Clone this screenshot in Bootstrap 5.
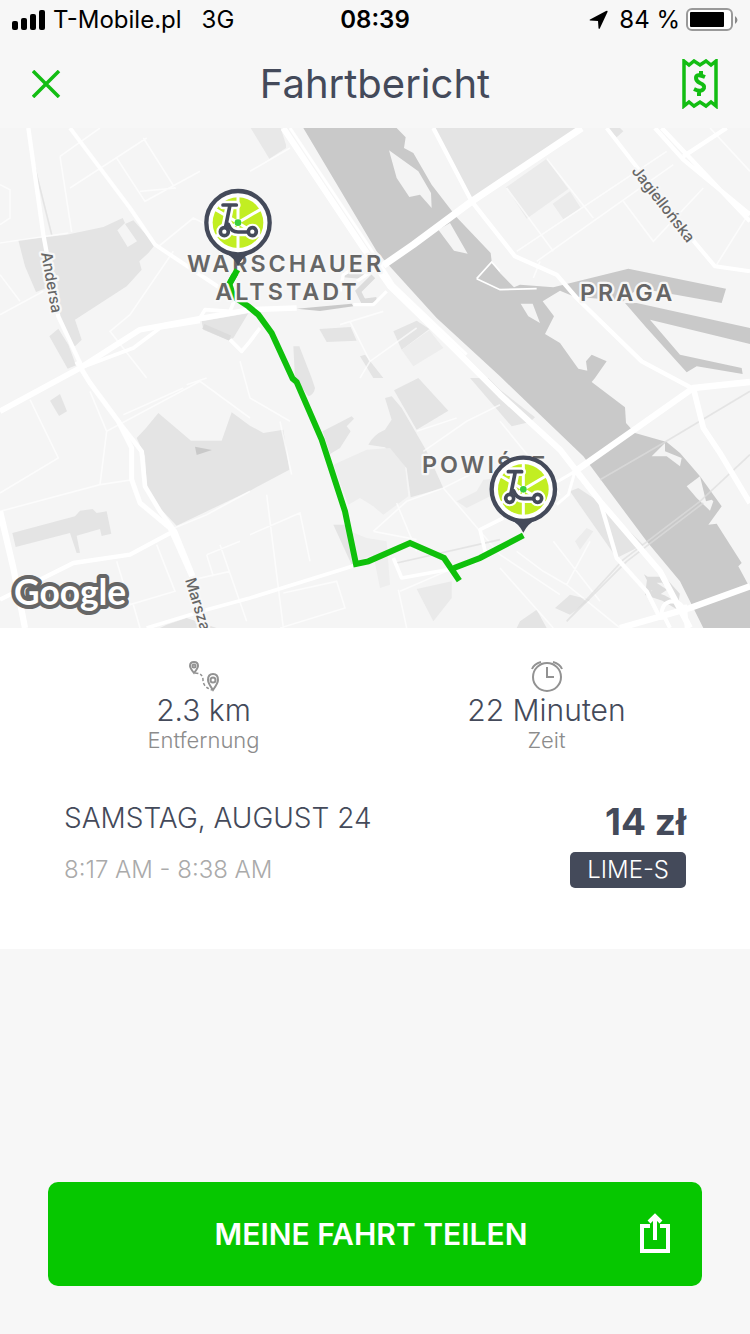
<!DOCTYPE html>
<html lang="de">
<head>
<meta charset="utf-8">
<meta name="viewport" content="width=device-width, initial-scale=1">
<title>Fahrtbericht</title>
<link href="https://cdn.jsdelivr.net/npm/bootstrap@5.3.0/dist/css/bootstrap.min.css" rel="stylesheet">
<style>
  :root { --ink: #444a5a; --lime: #06c700; }
  body { background: #f7f7f7; color: var(--ink); font-family: Inter, "Liberation Sans", sans-serif; font-weight: 300; }
  .status { height: 40px; padding: 0 12px; font-size: 24px; font-weight: 400; line-height: 40px; color: #000; }
  .status-side { flex: 1 1 0; }
  .status-net { gap: 20px; margin-left: 7px; }
  .status-power { gap: 6px; }
  .status-time { font-weight: 600; }
  .titlebar { height: 88px; padding: 0 32px; }
  .titlebar h1 { font-size: 40px; line-height: 44px; font-weight: 400; }
  .icon-btn { line-height: 0; }
  .map-label { fill: #666; font-weight: 500; stroke: #f7f7f7; stroke-width: 14px; stroke-linejoin: round; paint-order: stroke; }
  .district { font-size: 70px; letter-spacing: 9px; font-weight: 600; }
  .street { font-size: 46px; }
  .maker { font-family: Lato, sans-serif; font-size: 106px; font-weight: 700; fill: #fff; stroke: #666; stroke-width: 24px; stroke-linejoin: round; paint-order: stroke; }
  .stats { padding: 32px 32px 0; }
  .stat-value { font-size: 30px; line-height: 36px; }
  .stat-name { font-size: 22px; line-height: 24px; color: #8c8c8c; }
  .trip { padding: 48px 64px 61px; }
  .trip-date { font-size: 28px; line-height: 36px; }
  .trip-time { font-size: 24px; line-height: 36px; color: #aaa; }
  .trip-price { font-size: 37px; line-height: 44px; font-weight: 700; }
  .trip-type { background: var(--ink); color: #fff; font-size: 24px; line-height: 36px; padding: 0 17px; border-radius: 5px; }
  .share { background: var(--lime); color: #fff; height: 104px; border: 0; border-radius: 10px; font-size: 30px; line-height: 36px; font-weight: 600; padding: 0 31px; }
  .share-text { padding-left: 24px; }
</style>
</head>
<body class="d-flex flex-column min-vh-100">

<header>
  <div class="status d-flex align-items-center">
    <div class="status-side d-flex align-items-center">
      <svg width="34" height="20" viewBox="0 0 34 20" aria-label="Signal"><rect y="11" width="6" height="9" rx="2"/><rect x="9" y="8" width="6" height="12" rx="2"/><rect x="18" y="4" width="6" height="16" rx="2"/><rect x="27" width="6" height="20" rx="2"/></svg>
      <div class="status-net d-flex"><span>T-Mobile.pl</span><span>3G</span></div>
    </div>
    <span class="status-time">08:39</span>
    <div class="status-side status-power d-flex align-items-center justify-content-end">
      <svg width="20" height="20" viewBox="0 0 20 20" class="me-1" aria-hidden="true"><path d="M1 9.500 17 1Q19 0 18.500 2L11 18Q10 20 9.500 18L9 11 1 10.500Q0 10 1 9.500Z"/></svg>
      <span>84 %</span>
      <svg width="52" height="24" viewBox="0 0 52 24" aria-label="Akku"><rect x="1" y="1" width="45" height="21" rx="5" fill="#fff" stroke="#999" stroke-width="2"/><rect x="4" y="4" width="34" height="15" rx="1"/><path d="M49 8Q54 12 49 16Z" fill="#888"/></svg>
    </div>
  </div>
  <div class="titlebar d-flex align-items-center justify-content-between">
    <button type="button" class="btn p-0 border-0 icon-btn" aria-label="Schließen"><svg width="36" height="28" viewBox="0 0 36 28"><path d="M1 1 27 27M27 1 1 27" stroke="#12bd12" stroke-width="3.500"/></svg></button>
    <h1 class="m-0">Fahrtbericht</h1>
    <button type="button" class="btn p-0 border-0 icon-btn" aria-label="Quittung"><svg width="36" height="50" viewBox="0 0 36 50" fill="none" stroke="#12bd12" stroke-width="3.500"><path d="M2 2 7 6 12 2 18 6 24 2 29 6 34 2V47L29 43 24 47 18 43 12 47 7 43 2 47Z"/><path d="M23 18Q14 14 14 19 14 22 18 24 23 26 22 29 20 34 12 30M19 12V17M17 31V37" stroke-width="4"/></svg></button>
  </div>
</header>

<svg class="d-block w-100" viewBox="0 0 2250 1500" role="img" aria-label="Karte der Fahrt">
  <defs>
    <g id="pin">
      <path d="M-62 78 -38 92Q-14 102 0 130 14 102 38 92L62 78Z" fill="#444a5a"/>
      <circle r="95" fill="#fff" stroke="#444a5a" stroke-width="13"/>
      <circle r="76" fill="#c2ee22"/>
      <path d="M0-78V78M0 0 68-40M0 0-68-40M0 0 68 42M0 0-68 42" stroke="#fff" stroke-width="9"/>
      <g fill="none" stroke-linecap="round" stroke-linejoin="round">
        <g stroke="#fff" stroke-width="26"><path d="M-45-53H-5M-24-53-37 12M-29 5Q-20 28 0 28H30"/><circle cx="-41" cy="27" r="11"/><circle cx="43" cy="27" r="11"/></g>
        <g stroke="#444a5a" stroke-width="11"><path d="M-45-53H-5M-24-53-37 12M-29 5Q-20 28 0 28H30"/><circle cx="-41" cy="27" r="12"/><circle cx="43" cy="27" r="12"/></g>
      </g>
      <circle r="10" fill="#38cf3c"/>
    </g>
  </defs>
  <rect width="2250" height="1500" fill="#f5f5f5"/>

  <!-- parks and blocks -->
  <g fill="#e4e4e4">
    <path d="M55 337 200 320 310 297 368 270 375 285 352 307 383 357 411 340 375 288 400 277 465 350 445 375 418 400 425 425 380 475 225 575 245 635 225 655 205 645 175 570 140 480 108 492 75 415Z"/>
    <path d="M148 625 175 602 205 650 228 712 203 722Z"/>
    <path d="M605 580 745 556 700 630 685 637 610 605Z"/>
    <path d="M752 0H842L858 50V60L808 92Z" fill="#e8e8e8"/>
    <path d="M1305 0H1740L1500 155 1415 212Z"/>
    <path d="M958 603 1052 597 1070 638 980 642ZM880 655H898L935 750 945 780Q942 800 925 805L885 750ZM1080 685 1095 680 1150 750H1120Z"/>
    <path d="M1180 610 1250 578 1288 603 1205 665Z"/>
    <path d="M1205 665 1288 607 1330 660 1240 715Z" fill="#ededed"/>
    <path d="M150 818 180 798 201 850 177 864Z"/>
    <path d="M410 930 438 900 475 855 573 938H665L695 853 750 893 790 915 850 905 868 1025 750 1088 530 1193 465 1125 440 1070 435 985Z"/>
    <path d="M37 1215 225 1165 240 1148 278 1143 290 1155 320 1150 334 1217 305 1224 300 1203 230 1223 240 1274 230 1275 210 1215 47 1257Z"/>
    <path d="M968 910 1055 865 1062 872 1040 895 1052 910 1020 960 990 978ZM1182 787 1255 750 1345 848 1250 905Z"/>
    <path d="M1155 810 1175 805 1205 840 1280 970 1330 1080 1232 1108 1220 1020 1155 958 1105 950Q1120 920 1155 905L1175 875Z"/>
    <path d="M1000 1010 1100 965 1170 960 1215 1015 1225 1105 1150 1160 1120 1135 1080 1110 1045 1130Z" fill="#ededed"/>
    <path d="M1000 1190 1040 1190 1070 1300 1055 1310Z"/>
    <path d="M1050 1210 1100 1230 1160 1240 1170 1370 1140 1380 1120 1280 1070 1300Z" fill="#eee"/>
    <path d="M1250 1383 1355 1360V1410L1300 1480Z" fill="#eaeaea"/>
    <path d="M1500 785 1605 868 1590 882 1535 895 1410 750 1465 750Z"/>
    <path d="M1710 1090 1735 1080 1795 1120 1930 1250 1850 1290Z"/>
    <path d="M1665 1440 1710 1400 1770 1415 1710 1460ZM1560 1480 1610 1445 1640 1500H1550ZM500 1490 560 1470 650 1500H480Z"/>
    <path d="M1518 178 1640 92 1705 183 1580 272ZM1658 227 1710 190 1742 240 1690 274Z" fill="#ebebeb"/>
    <path d="M1370 1120 1430 1090 1450 1055 1500 1050V1090L1400 1140ZM1725 1240 1760 1200 1780 1210 1740 1265Z" fill="#ececec"/>
    <path d="M1820 0H1860L1870 10 1850 28Z"/>
  </g>
  <g fill="none" stroke="#dcdcdc" stroke-width="16"><path d="M610 595 690 630M1120 445 1075 490 1090 520 1130 515M1030 440 1090 445"/></g>
  <path d="M890 542 1055 527 1060 535 960 549ZM585 956 636 966 590 981Z" fill="#c9c9c9"/>

  <!-- minor streets -->
  <g fill="none" stroke="#fff" stroke-opacity=".65" stroke-width="5">
    <path d="M0 345 205 315M180 85 215 312M180 85 300 0M210 180 440 30M350 90 435 220 600 130M430 30 525 180 420 190M0 170 30 185V270L0 290M0 440 60 520M0 560 130 490M470 360 580 270 640 300M520 370 390 560 330 610 440 750M90 815 175 990 0 1095M0 1150 300 1070 400 1055M300 1070 320 910 270 790M320 910 600 760 750 870M370 860 550 780M560 770 620 750M750 130 870 60M510 1205 620 1160 750 1090M620 1280 720 1240M620 1280 640 1345M660 1250 740 1480M580 1355 690 1330M470 1250 525 1390 390 1430 350 1300M400 1430 420 1500M750 1220 900 1155 930 1300M800 1100 850 1500M850 1395 1010 1360 1035 1440 840 1500M870 880 750 810 720 700M840 880 875 1040M1050 580 1110 700 1250 600M1020 590 1150 550M1110 700 1080 750M1250 910 1370 870M1270 970 1400 880 1500 830M1330 1080 1500 1280 1680 1400M1120 1210 1220 1120 1330 1080 1430 1030M1190 1125 1250 1270M1120 1210 1250 1235M1195 1385 1220 1500M1200 1390 1500 1260M1500 1320 1660 1500M1550 1270 1630 1330 1700 1370 1860 1500M1660 1240 1800 1420M1700 1370 1770 1240M1500 880 1680 1100"/>
    <path d="M1550 370 2000 70M1610 400 2020 110M1520 180 1660 370M1640 92 1780 270M1870 220 1960 340 2110 180M1620 400 1600 450M2250 250 2150 410M2130 0 2250 130"/>
  </g>

  <!-- river with islands and harbour -->
  <path d="M910 0 1130 370 1165 410 1310 570 1500 745 1750 985 1940 1240 2040 1360 2110 1500H2250V1380L2215 1315 2225 1305 2150 1187 2125 1190 2165 1135 2100 1045 2040 975 2000 942 1905 915 1878 885 1875 838 1775 762 1785 750 1820 700 1775 680 1758 700 1762 728 1735 722 1680 645 1635 618 1662 565 1628 520 1680 488 1720 505 1870 520 1915 480 2165 525 2178 482 1885 422 1660 478 1560 470 1542 478 1500 435 1475 400 1472 375 1370 268 1295 170 1240 75 1212 60 1217 28 1190 0Z" fill="#c9c9c9"/>
  <path d="M1875 525 1910 525 2250 600V648L1950 575 2040 680 2225 720 2228 738 2090 715 2060 733 1940 600Z" fill="#c9c9c9"/>
  <path d="M1167 67 1255 130 1293 195 1295 240 1260 200 1228 207 1190 150ZM1315 305 1350 285 1403 377 1362 368ZM1562 527H1598L1620 585 1585 565ZM1955 985 1995 945V970L2045 990 2040 1015 2000 985ZM2060 1075 2100 1045 2118 1120 2135 1115 2140 1120 2130 1148 2090 1110Z" fill="#f4f4f4"/>
  <g fill="none" stroke="#ddd" stroke-opacity=".7" stroke-width="5"><path d="M1800 1055 1990 945 2250 790M1700 1480 1870 1295 2100 1120 2250 980M1710 1470 1880 1300 2110 1125M95 80 155 320M1190 1305 1500 1235"/></g>
  <path d="M1430 452 1475 402 1500 430M1430 452 1500 485 1610 482" fill="none" stroke="#fff" stroke-width="5"/>
  <path d="M1950 1355 1990 1355 2030 1400 2025 1430 1990 1410 1945 1395ZM1955 1365 1970 1395 1985 1385Z" fill="none" stroke="#dcdcdc" stroke-width="18"/>

  <!-- main streets -->
  <g fill="none" stroke="#fff" stroke-linejoin="round">
    <path d="M85 0 130 320 175 565 245 715" stroke-width="13"/>
    <path d="M210 0 390 240 465 350 660 480" stroke-width="12"/>
    <path d="M0 850 240 720 420 605 610 570 750 545 890 540" stroke-width="17"/>
    <path d="M240 720 400 660 480 600 600 580M600 570 615 545 690 550 710 500M690 635 725 670 750 640M750 640 780 600" stroke-width="11"/>
    <path d="M230 700 270 765 355 880 395 960V1055L420 1125 510 1200 575 1345" stroke-width="15"/>
    <path d="M355 880 425 970 435 1075 480 1150 525 1210 580 1345" stroke-width="14"/>
    <path d="M0 1150 40 1320 75 1500" stroke-width="19"/>
    <path d="M0 1415 110 1360 220 1305 390 1280 520 1210" stroke-width="13"/>
    <path d="M440 1500 620 1445 750 1410 1040 1320 1070 1310M1180 1290 1205 1350 1370 1320 1430 1300M1460 1290 1440 1205 1510 1170" stroke-width="11"/>
    <path d="M850 0 1090 360 1170 475 1350 650 1500 800 1680 965 1800 1120 1980 1330 2070 1500" stroke-width="18"/>
    <path d="M870 0 1110 360 1180 470 1400 680" stroke-width="9"/>
    <path d="M1060 530H1120L1160 490M1020 490 1030 440 1080 410M1070 460 1160 400" stroke-width="10"/>
    <path d="M1150 412 1240 350 1415 220 1745 0" stroke-width="21"/>
    <path d="M1300 0 1415 220 1545 385 1670 440 1730 510 1925 700 2075 780" stroke-width="13"/>
    <path d="M1820 0 2090 350 2145 415 2250 430" stroke-width="12"/>
    <path d="M1965 0 2050 95 2250 260M1985 0 2070 90 2250 280M2050 85 2180 0" stroke-width="13"/>
    <path d="M1725 1030 1910 900 2080 780 2250 762" stroke-width="19"/>
    <path d="M1640 1080 1725 1030 1705 1100 1670 1130" stroke-width="9"/>
    <path d="M2080 780 2110 900 2160 975 2250 1125" stroke-width="17"/>
    <path d="M1730 1035 1800 1120 1850 1290 1940 1390 1980 1470" stroke-width="13"/>
    <path d="M1860 1500 2070 1440 2250 1375" stroke-width="19"/>
    <path d="M1985 1475Q1980 1420 2020 1420 2050 1425 2050 1450M1990 1460 2010 1500M2055 1430 2060 1500" stroke-width="12"/>
  </g>

  <!-- ride -->
  <path d="M712 425 688 468 700 505 745 535 775 560 815 615 878 752 890 762 965 935 1035 1150 1068 1308 1105 1300 1230 1245 1332 1290 1378 1358M1362 1320 1440 1290 1570 1222" fill="none" stroke="#0fc00b" stroke-width="18"/>

  <g class="map-label district">
    <text x="561" y="432">WARSCHAUER</text>
    <text x="646" y="516">ALTSTADT</text>
    <text x="1740" y="518">PRAGA</text>
    <text x="1266" y="1036">POWIŚLE</text>
  </g>
  <path d="M712 425 688 468" fill="none" stroke="#0fc00b" stroke-width="18"/>
  <g class="map-label street">
    <text transform="translate(123 375) rotate(80)">Andersa</text>
    <text transform="translate(1893 130) rotate(52)">Jagiellońska</text>
    <text transform="translate(555 1355) rotate(73)">Marsza</text>
  </g>
  <text class="maker" x="42" y="1432">Google</text>

  <use href="#pin" x="714" y="284"/>
  <use href="#pin" x="1570" y="1084"/>
</svg>

<main class="bg-white">
  <section class="stats row g-0 text-center">
    <div class="col-6">
      <svg class="d-block mx-auto" width="30" height="32" viewBox="0 0 30 32" fill="none" stroke="#929292" stroke-width="2"><path d="M5 13Q1 8 1 6 1 2 5 2T9 6Q9 8 5 13ZM24 30Q19 23 19 20 19 14 24 14T29 20Q29 23 24 30Z"/><circle cx="5" cy="6" r="1.500"/><circle cx="24" cy="20" r="2.500"/><path d="M6 13Q14 13 14 20T23 30" stroke-width="1.500" stroke-dasharray="3 2"/></svg>
      <div class="stat-value">2.3 km</div>
      <div class="stat-name">Entfernung</div>
    </div>
    <div class="col-6">
      <svg class="d-block mx-auto" width="34" height="32" viewBox="0 0 34 32" fill="none" stroke="#929292" stroke-width="2"><circle cx="17" cy="17" r="14"/><path d="M17 7V17H24M2 9Q4 4 11 2M32 9Q30 4 23 2"/></svg>
      <div class="stat-value">22 Minuten</div>
      <div class="stat-name">Zeit</div>
    </div>
  </section>
  <section class="trip d-flex justify-content-between">
    <div class="d-flex flex-column gap-3">
      <div class="trip-date">SAMSTAG, AUGUST 24</div>
      <div class="trip-time">8:17 AM - 8:38 AM</div>
    </div>
    <div class="d-flex flex-column align-items-end gap-2">
      <div class="trip-price">14 zł</div>
      <div class="trip-type">LIME-S</div>
    </div>
  </section>
</main>

<footer class="mt-auto p-5">
  <button type="button" class="share btn w-100 d-flex align-items-center">
    <span class="share-text flex-fill">MEINE FAHRT TEILEN</span>
    <svg width="32" height="42" viewBox="0 0 32 42" fill="none" stroke="#fff" stroke-width="4" aria-hidden="true"><path d="M11 13H3V38H29V13H21M16 27V4M10 9 16 3 22 9"/></svg>
  </button>
</footer>

<script src="https://cdn.jsdelivr.net/npm/bootstrap@5.3.0/dist/js/bootstrap.bundle.min.js"></script>
</body>
</html>
